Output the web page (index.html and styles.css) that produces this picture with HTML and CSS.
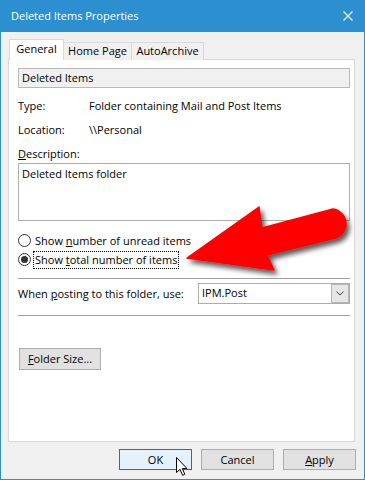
FILE: index.html
```html
<!DOCTYPE html>
<html lang="en">
<head>
  <meta charset="UTF-8">
  <meta name="viewport" content="width=device-width, initial-scale=1.0">
  <title>Deleted Items Properties</title>
  <link rel="stylesheet" href="styles.css">
</head>
<body>
  <div class="window">
    <div class="titlebar">
      <span class="title">Deleted Items Properties</span>
      <svg class="close" width="10" height="10" viewBox="0 0 10 10">
        <path d="M0.5 0.5 L9.5 9.5 M9.5 0.5 L0.5 9.5" stroke="#fff" stroke-width="1.1" fill="none"/>
      </svg>
    </div>

    <div class="main">
      <div class="tabs">
        <div class="tab tab-general active">General</div>
        <div class="tab tab-home">Home Page</div>
        <div class="tab tab-archive">AutoArchive</div>
      </div>

      <div class="panel">
        <div class="name-field">Deleted Items</div>

        <div class="info">
          <span>Type:</span><span>Folder containing Mail and Post Items</span>
          <span>Location:</span><span>\\Personal</span>
        </div>

        <div class="desc-label"><u>D</u>escription:</div>
        <div class="desc-box">Deleted Items folder</div>

        <div class="radios">
          <div class="radio">
            <span class="circle"></span>
            <span class="radio-text">Show <u>n</u>umber of unread items</span>
          </div>
          <div class="radio checked">
            <span class="circle"></span>
            <span class="radio-text focus">Show <u>t</u>otal number of items</span>
          </div>
        </div>

        <div class="sep sep-top"></div>

        <div class="posting">
          <span class="posting-label">When <u>p</u>osting to this folder, use:</span>
          <div class="combo">
            <span class="combo-value">IPM.Post</span>
            <span class="combo-btn">
              <svg width="8" height="5" viewBox="0 0 8 5">
                <path d="M0.5 0.5 L4 4 L7.5 0.5" stroke="#444" stroke-width="1" fill="none"/>
              </svg>
            </span>
          </div>
        </div>

        <div class="sep sep-bottom"></div>

        <button class="btn folder-size"><u>F</u>older Size...</button>
      </div>

      <div class="footer">
        <button class="btn default">OK</button>
        <button class="btn">Cancel</button>
        <button class="btn"><u>A</u>pply</button>
      </div>
    </div>

    <!-- red callout arrow drawn over the dialog -->
    <svg class="arrow" width="365" height="480" viewBox="0 0 365 480">
      <defs>
        <filter id="shadow" x="-20%" y="-20%" width="140%" height="140%">
          <feDropShadow dx="3" dy="4" stdDeviation="2.5" flood-color="#000" flood-opacity="0.65"/>
        </filter>
      </defs>
      <path d="M187 258 L259 207 L262 228 L333 209 A15 15 0 0 1 336 238 L267 255 L274 270 Z"
            fill="#ff0000" stroke="#ff0000" stroke-width="1.5" stroke-linejoin="round" filter="url(#shadow)"/>
    </svg>

    <svg class="cursor" width="13" height="20" viewBox="0 0 13 20">
      <path d="M0.5 0.5 L0.5 15.5 L4 12.3 L6.6 18.3 L8.8 17.3 L6.3 11.5 L11 11.5 Z"
            fill="#fff" stroke="#000" stroke-width="1" stroke-linejoin="miter"/>
    </svg>
  </div>
</body>
</html>
```

FILE: styles.css
```css
body {
  margin: 0;
  font-family: "Open Sans", "Noto Sans", sans-serif;
  font-size: 11px;
  color: #000;
}
.window {
  position: relative;
  width: 365px;
  height: 480px;
  box-sizing: border-box;
  border: 1px solid #2b8fd0;
  border-top: none;
  background: #f0f0f0;
  overflow: hidden;
}
.titlebar {
  height: 32px;
  background: #2b8fd0;
  color: #fff;
  display: flex;
  align-items: center;
  justify-content: space-between;
  padding: 0 11px 0 10px;
}
.title {
  font-size: 11px;
  line-height: 16px;
}
.close {
  display: block;
}
.main {
  padding: 7px 9px 0 7px;
}
.tabs {
  position: relative;
  z-index: 1;
  display: flex;
  align-items: flex-end;
  height: 21px;
  margin-bottom: -1px;
  padding-left: 2px;
}
.tab {
  box-sizing: border-box;
  height: 18px;
  margin-left: -1px;
  border: 1px solid #d9d9d9;
  border-bottom: none;
  background: #f0f0f0;
  text-align: center;
  line-height: 16px;
}
.tab.active {
  height: 21px;
  background: #fff;
  line-height: 16px;
  padding-top: 1px;
}
.tab-general {
  width: 55px;
}
.tab-home {
  width: 69px;
}
.tab-archive {
  width: 73px;
}
.panel {
  box-sizing: border-box;
  height: 383px;
  background: #fff;
  border: 1px solid #d9d9d9;
  padding: 0 4px 0 9px;
}
.name-field {
  box-sizing: border-box;
  height: 20px;
  margin-top: 8px;
  border: 1px solid #b9b9b9;
  background: #f0f0f0;
  padding-left: 3px;
  line-height: 17px;
}
.info {
  display: grid;
  grid-template-columns: 71px 1fr;
  row-gap: 8px;
  margin-top: 10px;
  line-height: 16px;
}
.desc-label {
  margin-top: 8px;
  line-height: 16px;
}
.desc-box {
  box-sizing: border-box;
  height: 58px;
  margin-top: 1px;
  border: 1px solid #adadad;
  padding: 2px 3px;
  line-height: 16px;
}
.radios {
  margin-top: 10px;
}
.radio {
  display: flex;
  align-items: center;
  height: 19px;
  gap: 2px;
}
.circle {
  position: relative;
  box-sizing: border-box;
  width: 13px;
  height: 13px;
  border: 1px solid #333;
  border-radius: 50%;
  background: #fff;
}
.radio.checked .circle::after {
  content: "";
  position: absolute;
  left: 2px;
  top: 2px;
  width: 7px;
  height: 7px;
  border-radius: 50%;
  background: #333;
}
.radio-text {
  border: 1px dotted transparent;
  padding: 0 1px;
  line-height: 16px;
}
.radio-text.focus {
  border-color: #000;
}
.sep {
  height: 1px;
  background: #a0a0a0;
}
.sep-top {
  margin-top: 9px;
}
.posting {
  display: flex;
  align-items: center;
  margin-top: 4px;
}
.posting-label {
  flex: 1;
  line-height: 16px;
}
.combo {
  box-sizing: border-box;
  width: 152px;
  height: 21px;
  border: 1px solid #adadad;
  background: #fff;
  display: flex;
  align-items: center;
  justify-content: space-between;
  padding: 0 0 0 3px;
}
.combo-value {
  line-height: 16px;
  margin-top: -2px;
}
.combo-btn {
  box-sizing: border-box;
  width: 18px;
  height: 19px;
  border: 1px solid #b4b4b4;
  background: #e6e6e6;
  display: flex;
  align-items: center;
  justify-content: center;
}
.combo-btn svg {
  display: block;
}
.sep-bottom {
  margin-top: 11px;
}
.btn {
  box-sizing: border-box;
  width: 73px;
  height: 21px;
  border: 1px solid #adadad;
  background: #e1e1e1;
  font-family: inherit;
  font-size: 11px;
  color: #000;
  padding: 0;
  line-height: 16px;
}
.btn.default {
  border-color: #0078d7;
  background: #e5f1fb;
}
.folder-size {
  display: block;
  width: 82px;
  height: 22px;
  margin: 32px 0 0 1px;
}
.footer {
  display: flex;
  justify-content: flex-end;
  gap: 9px;
  margin-top: 7px;
  margin-right: -1px;
}
.arrow {
  position: absolute;
  left: -1px;
  top: 0;
  pointer-events: none;
}
.cursor {
  position: absolute;
  left: 175px;
  top: 457px;
  pointer-events: none;
}
```
